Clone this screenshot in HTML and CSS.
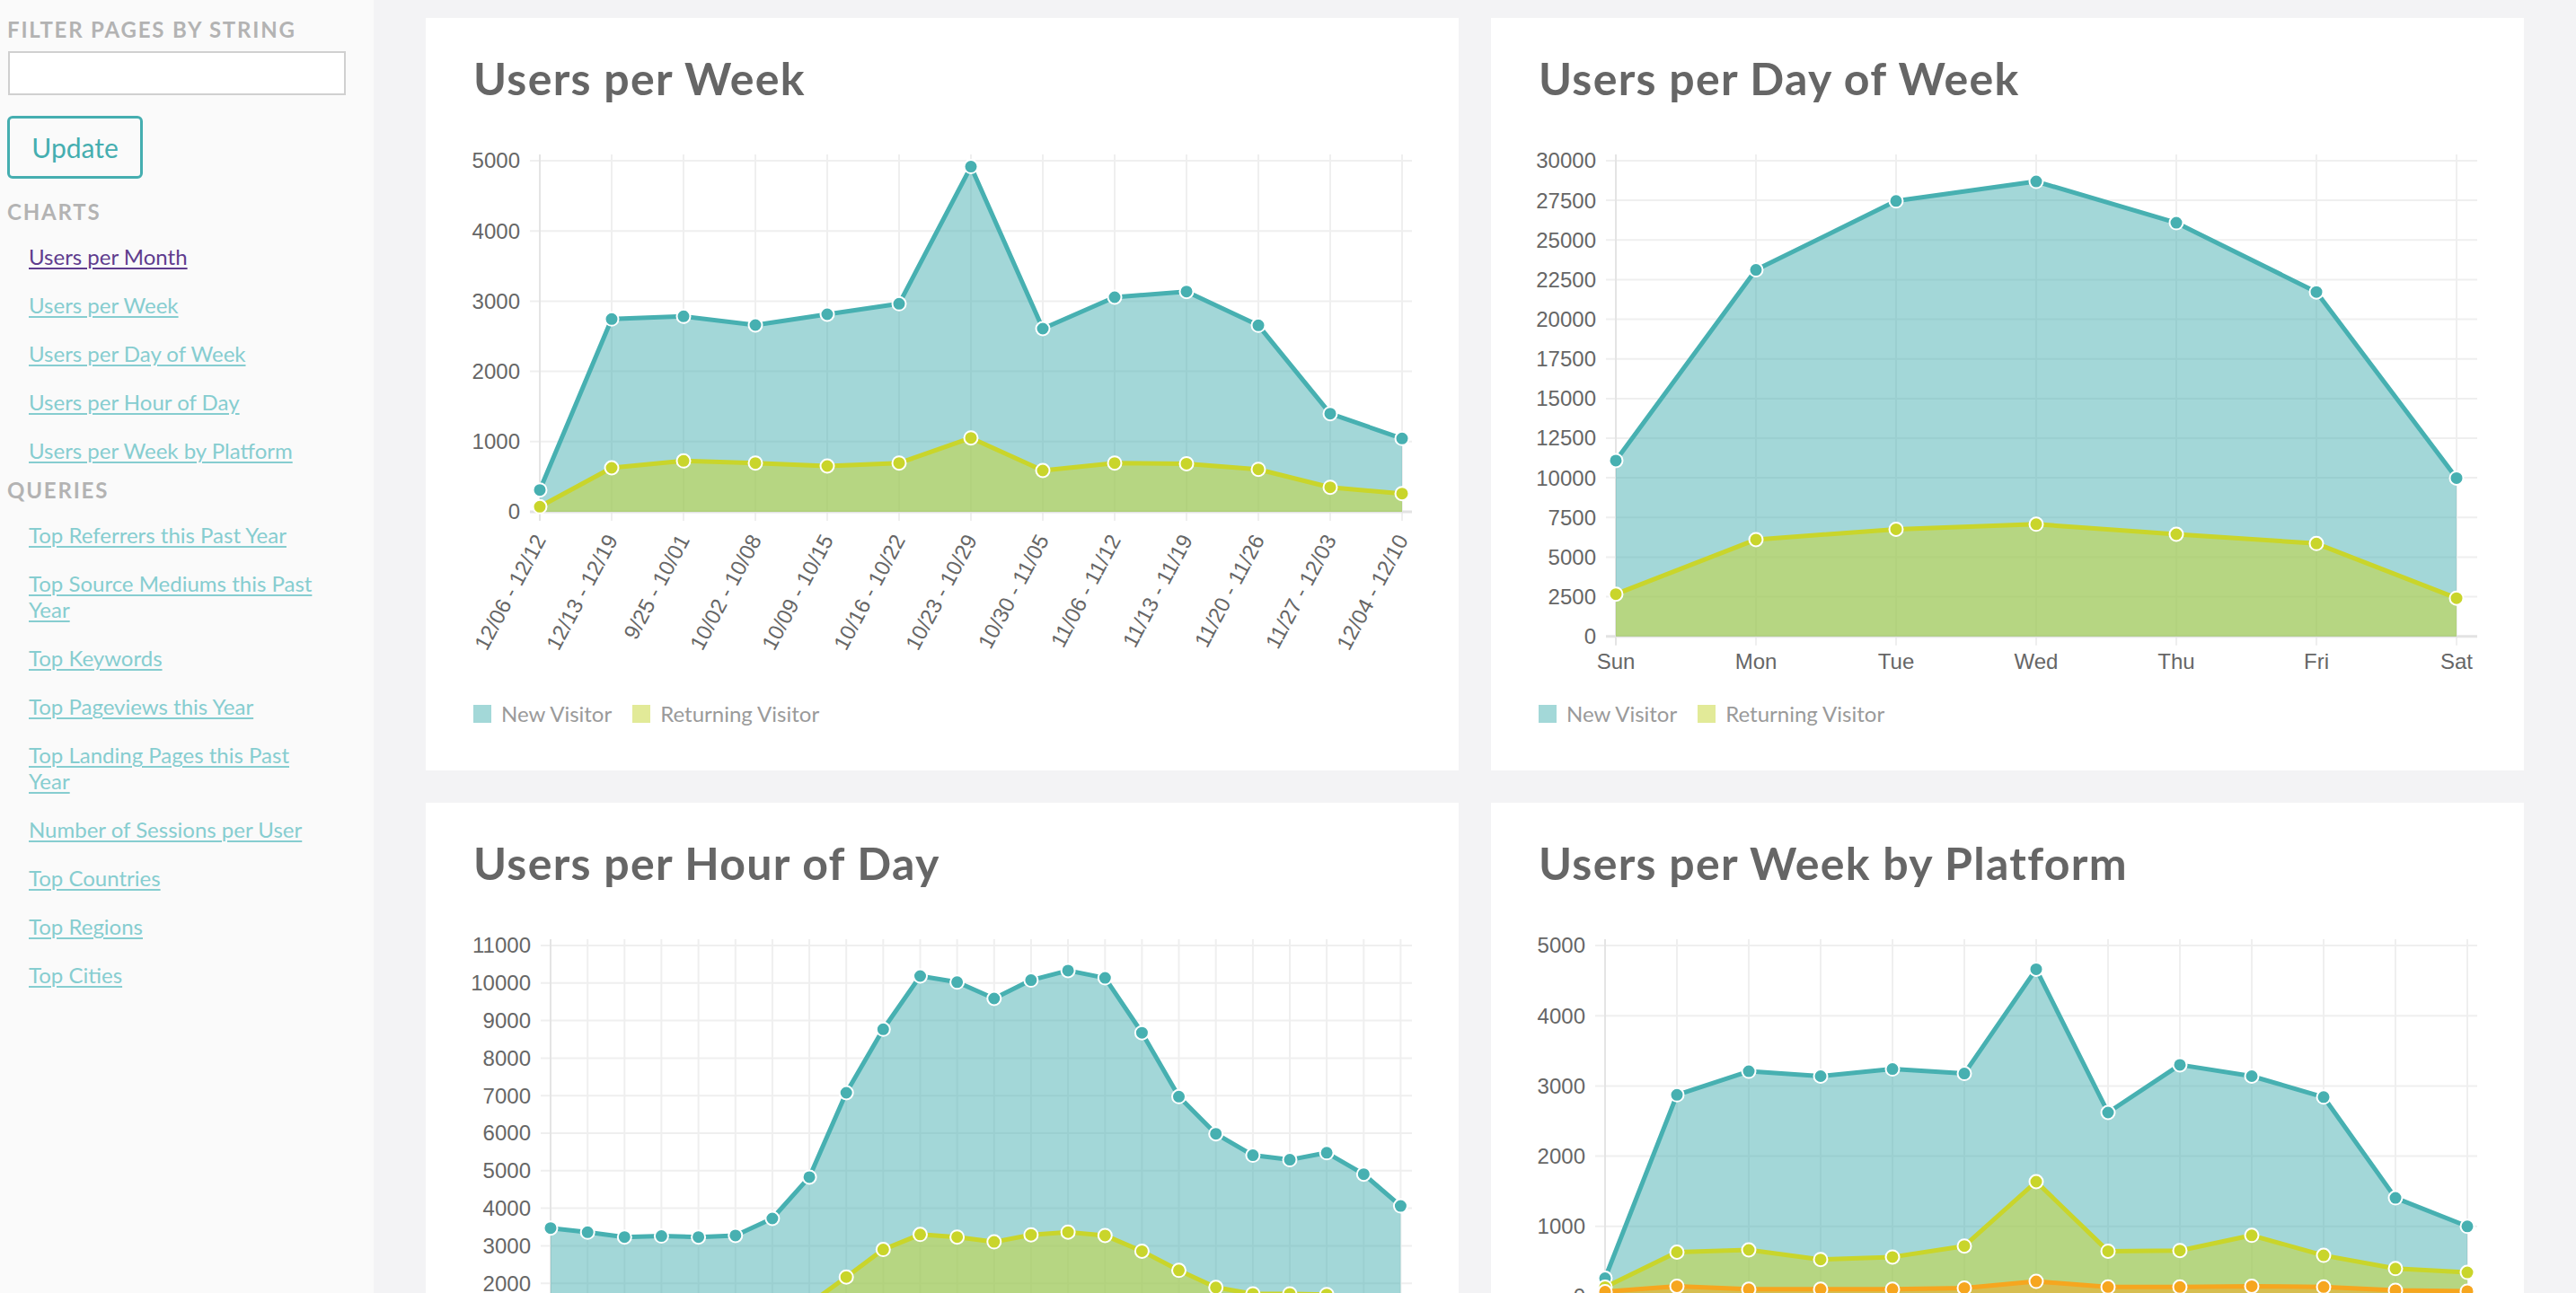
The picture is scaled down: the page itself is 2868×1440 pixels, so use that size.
FILE: index.html
```html
<!DOCTYPE html>
<html lang="en">
<head>
<meta charset="utf-8">
<title>Analytics</title>
<link rel="stylesheet" href="styles.css">
</head>
<body>
<aside class="sidebar">
  <h3 class="side-heading side-heading--top">Filter pages by string</h3>
  <input class="filter-input" type="text">
  <button class="update-btn" type="button">Update</button>
  <h3 class="side-heading side-heading--charts">Charts</h3>
  <ul class="side-links">
    <li><a class="is-visited" href="#">Users per Month</a></li>
    <li><a href="#">Users per Week</a></li>
    <li><a href="#">Users per Day of Week</a></li>
    <li><a href="#">Users per Hour of Day</a></li>
    <li><a href="#">Users per Week by Platform</a></li>
  </ul>
  <h3 class="side-heading">Queries</h3>
  <ul class="side-links">
    <li><a href="#">Top Referrers this Past Year</a></li>
    <li><a href="#">Top Source Mediums this Past Year</a></li>
    <li><a href="#">Top Keywords</a></li>
    <li><a href="#">Top Pageviews this Year</a></li>
    <li><a href="#">Top Landing Pages this Past Year</a></li>
    <li><a href="#">Number of Sessions per User</a></li>
    <li><a href="#">Top Countries</a></li>
    <li><a href="#">Top Regions</a></li>
    <li><a href="#">Top Cities</a></li>
  </ul>
</aside>
<main class="main">
  <section class="card">
    <h2 class="card-title">Users per Week</h2>
    <svg id="c1" class="chart" width="1045" height="610" viewBox="0 0 1045 610"></svg>
    <div class="legend">
      <span class="legend-item"><i class="swatch swatch--new"></i>New Visitor</span>
      <span class="legend-item"><i class="swatch swatch--ret"></i>Returning Visitor</span>
    </div>
  </section>
  <section class="card">
    <h2 class="card-title">Users per Day of Week</h2>
    <svg id="c2" class="chart" width="1045" height="610" viewBox="0 0 1045 610"></svg>
    <div class="legend">
      <span class="legend-item"><i class="swatch swatch--new"></i>New Visitor</span>
      <span class="legend-item"><i class="swatch swatch--ret"></i>Returning Visitor</span>
    </div>
  </section>
  <section class="card">
    <h2 class="card-title">Users per Hour of Day</h2>
    <svg id="c3" class="chart" width="1045" height="610" viewBox="0 0 1045 610"></svg>
    <div class="legend">
      <span class="legend-item"><i class="swatch swatch--new"></i>New Visitor</span>
      <span class="legend-item"><i class="swatch swatch--ret"></i>Returning Visitor</span>
    </div>
  </section>
  <section class="card">
    <h2 class="card-title">Users per Week by Platform</h2>
    <svg id="c4" class="chart" width="1045" height="610" viewBox="0 0 1045 610"></svg>
    <div class="legend">
      <span class="legend-item"><i class="swatch swatch--new"></i>Desktop</span>
      <span class="legend-item"><i class="swatch swatch--ret"></i>Mobile</span>
      <span class="legend-item"><i class="swatch swatch--tab"></i>Tablet</span>
    </div>
  </section>
</main>
<script src="script.js"></script>
</body>
</html>
```

FILE: styles.css
```css
* { box-sizing: border-box; }
html, body { margin: 0; height: 100%; overflow: hidden; }
body {
  display: flex;
  font-family: Lato, "Open Sans", sans-serif;
  background: #f3f3f5;
}
.sidebar {
  width: 416px;
  flex: none;
  background: #fafafa;
  padding: 0 0 0 8px;
}
.side-heading {
  margin: 0;
  font-size: 24px;
  line-height: 30px;
  font-weight: 700;
  letter-spacing: 1.8px;
  text-transform: uppercase;
  color: #b3b3b3;
}
.side-heading--top { padding-top: 18px; }
.side-heading--charts { margin-top: 22px; }
.filter-input {
  display: block;
  margin: 9px 0 0 1px;
  width: 376px;
  height: 49px;
  border: 2px solid #d0d0d0;
  background: #fff;
  padding: 0;
}
.update-btn {
  display: block;
  margin-top: 23px;
  width: 151px;
  height: 70px;
  border: 3px solid #45aeb0;
  border-radius: 6px;
  background: transparent;
  color: #45aeb0;
  font-family: Lato, "Open Sans", sans-serif;
  font-size: 30px;
  padding: 0;
}
.side-links {
  list-style: none;
  margin: 0;
  padding: 20px 0 15px 24px;
  width: 359px;
}
.side-links li {
  font-size: 24px;
  line-height: 29px;
}
.side-links li + li { margin-top: 25px; }
.side-links a {
  color: #86cdd0;
  text-decoration: underline;
  text-decoration-thickness: 2px;
  text-underline-offset: 3px;
}
.side-links a.is-visited { color: #5f3d8e; }

.main {
  flex: 1;
  padding: 20px 58px;
  display: grid;
  grid-template-columns: 1150px 1150px;
  column-gap: 36px;
  row-gap: 36px;
  align-content: start;
}
.card {
  background: #fff;
  padding: 37px 52px 48px 53px;
}
.card-title {
  margin: 0 0 33px;
  font-size: 50px;
  line-height: 60px;
  font-weight: 700;
  letter-spacing: 1.3px;
  color: #666;
  white-space: nowrap;
}
.chart { display: block; overflow: visible; }
.chart .grid { stroke: #efefef; stroke-width: 2; }
.chart .axis { stroke: #e4e4e4; stroke-width: 2; }
.chart .zero { stroke: #e3e3e3; stroke-width: 3; }
.chart .tick-label {
  font-family: "Liberation Sans", Arial, sans-serif;
  font-size: 24px;
  fill: #666;
}
.chart .pt { stroke: #fff; stroke-width: 2; }
.chart .series-line { fill: none; stroke-width: 5; stroke-linejoin: round; }

.legend {
  display: flex;
  align-items: center;
  padding-top: 20px;
  height: 50px;
}
.legend-item {
  display: flex;
  align-items: center;
  margin-right: 23px;
  font-size: 24px;
  line-height: 30px;
  color: #9a9a9a;
}
.swatch {
  display: block;
  width: 20px;
  height: 20px;
  margin-right: 11px;
}
.swatch--new { background: #a3d8d8; }
.swatch--ret { background: #e2ea98; }
.swatch--tab { background: #fad291; }
```

FILE: script.js
```js
(function () {
  var TEAL = '#47b0b1', TEAL_F = 'rgba(71,176,177,0.5)';
  var YEL = '#c9d52b', YEL_F = 'rgba(201,213,43,0.5)';
  var ORA = '#f6a61f', ORA_F = 'rgba(246,166,31,0.5)';
  var weeks = ['12/06 - 12/12', '12/13 - 12/19', '9/25 - 10/01', '10/02 - 10/08', '10/09 - 10/15',
    '10/16 - 10/22', '10/23 - 10/29', '10/30 - 11/05', '11/06 - 11/12', '11/13 - 11/19',
    '11/20 - 11/26', '11/27 - 12/03', '12/04 - 12/10'];
  var hours = [];
  for (var k = 0; k < 24; k++) hours.push(String(k));

  var charts = {
    c1: {
      max: 5000, step: 1000, bottom: 420, axis: 74, dx: 80, labels: weeks, rot: true,
      series: [
        [TEAL, TEAL_F, [311, 2745, 2784, 2660, 2813, 2963, 4915, 2609, 3056, 3137, 2656, 1398, 1045]],
        [YEL, YEL_F, [73, 627, 725, 695, 652, 695, 1053, 588, 695, 686, 605, 349, 260]]
      ]
    },
    c2: {
      max: 30000, step: 2500, bottom: 558.7, axis: 86, dx: 156,
      labels: ['Sun', 'Mon', 'Tue', 'Wed', 'Thu', 'Fri', 'Sat'], rot: false,
      series: [
        [TEAL, TEAL_F, [11089, 23111, 27464, 28692, 26088, 21719, 9985]],
        [YEL, YEL_F, [2660, 6107, 6758, 7075, 6442, 5858, 2406]]
      ]
    },
    c3: {
      max: 11000, step: 1000, bottom: 488.8, axis: 86, dx: 41.15, labels: hours, rot: false,
      series: [
        [TEAL, TEAL_F, [3471, 3361, 3232, 3258, 3232, 3275, 3727, 4830, 7077, 8768, 10187, 10024,
          9589, 10077, 10333, 10136, 8675, 6974, 5983, 5411, 5292, 5478, 4907, 4060]],
        [YEL, YEL_F, [1000, 950, 850, 800, 780, 800, 1000, 1450, 2167, 2900, 3301, 3232,
          3103, 3292, 3363, 3275, 2856, 2344, 1890, 1720, 1720, 1700, 1450, 1300]]
      ]
    },
    c4: {
      max: 5000, step: 1000, bottom: 420, axis: 74, dx: 80, labels: weeks, rot: true,
      series: [
        [TEAL, TEAL_F, [262, 2874, 3209, 3140, 3241, 3177, 4662, 2622, 3300, 3140, 2842, 1406, 1000]],
        [YEL, YEL_F, [135, 633, 665, 528, 564, 720, 1637, 647, 656, 872, 587, 399, 344]],
        [ORA, ORA_F, [70, 148, 105, 105, 105, 123, 216, 137, 137, 148, 137, 91, 78]]
      ]
    }
  };

  function build(id, c) {
    var svg = document.getElementById(id);
    var W = 1045, top = 29, n = c.labels.length;
    var y = function (v) { return c.bottom - (v / c.max) * (c.bottom - top); };
    var x = function (i) { return c.axis + i * c.dx; };
    var h = '';
    var v, i, yy, xx;
    for (v = c.step; v <= c.max + 0.001; v += c.step) {
      yy = y(v).toFixed(1);
      h += '<line class="grid" x1="' + (c.axis - 11) + '" x2="' + W + '" y1="' + yy + '" y2="' + yy + '"/>';
    }
    for (i = 1; i < n; i++) {
      xx = x(i).toFixed(1);
      h += '<line class="grid" x1="' + xx + '" x2="' + xx + '" y1="' + (top - 7) + '" y2="' + (c.bottom + 10) + '"/>';
    }
    h += '<line class="axis" x1="' + c.axis + '" x2="' + c.axis + '" y1="' + (top - 7) + '" y2="' + (c.bottom + 10) + '"/>';
    h += '<line class="zero" x1="' + (c.axis - 11) + '" x2="' + W + '" y1="' + c.bottom + '" y2="' + c.bottom + '"/>';
    for (v = 0; v <= c.max + 0.001; v += c.step) {
      h += '<text class="tick-label" text-anchor="end" x="' + (c.axis - 22) + '" y="' + y(v).toFixed(1) + '" dy="0.35em">' + v + '</text>';
    }
    for (i = 0; i < n; i++) {
      xx = x(i).toFixed(1);
      if (c.rot) {
        h += '<text class="tick-label" text-anchor="end" dy="0.35em" transform="translate(' + xx + ',' + (c.bottom + 27) + ') rotate(-62)">' + c.labels[i] + '</text>';
      } else {
        h += '<text class="tick-label" text-anchor="middle" dy="0.35em" x="' + xx + '" y="' + (c.bottom + 28) + '">' + c.labels[i] + '</text>';
      }
    }
    c.series.forEach(function (s) {
      var col = s[0], fill = s[1], data = s[2];
      var pts = data.map(function (d, j) { return x(j).toFixed(1) + ',' + y(d).toFixed(1); });
      var area = x(0).toFixed(1) + ',' + c.bottom + ' ' + pts.join(' ') + ' ' + x(data.length - 1).toFixed(1) + ',' + c.bottom;
      h += '<polygon points="' + area + '" fill="' + fill + '"/>';
      h += '<polyline class="series-line" points="' + pts.join(' ') + '" stroke="' + col + '"/>';
      data.forEach(function (d, j) {
        h += '<circle class="pt" cx="' + x(j).toFixed(1) + '" cy="' + y(d).toFixed(1) + '" r="7.5" fill="' + col + '"/>';
      });
    });
    svg.innerHTML = h;
  }

  Object.keys(charts).forEach(function (id) { build(id, charts[id]); });
})();
```
